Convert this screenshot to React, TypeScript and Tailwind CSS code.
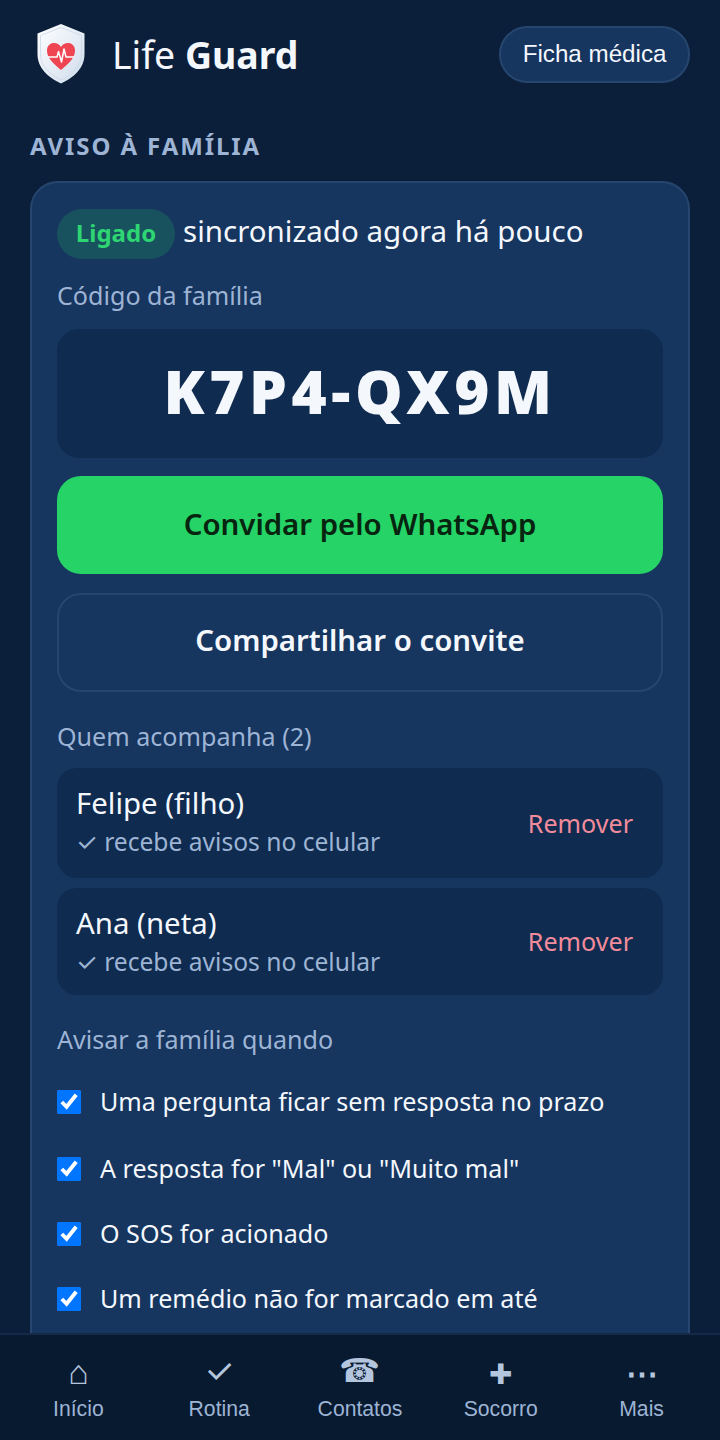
const alerts = [
  { label: "Uma pergunta ficar sem resposta no prazo", gap: "mb-[43px]" },
  { label: 'A resposta for "Mal" ou "Muito mal"', gap: "mb-[41px]" },
  { label: "O SOS for acionado", gap: "mb-[41px]" },
  { label: "Um remédio não for marcado em até", gap: "mb-[41px]" },
];

const navItems = [
  { glyph: "⌂", label: "Início", icon: "text-[34px] pt-[2px]" },
  { glyph: "✓", label: "Rotina", icon: "text-[34px]" },
  { glyph: "☎", label: "Contatos", icon: "text-[33px] pb-[2px]" },
  { glyph: "✚", label: "Socorro", icon: "text-[28px] pt-[6px]" },
  { glyph: "⋯", label: "Mais", icon: "text-[32px] font-bold pt-[6px]" },
];

function ShieldLogo() {
  return (
    <svg width="48" height="60" viewBox="0 0 48 60" className="shrink-0">
      <defs>
        <linearGradient id="shield" x1="0" y1="0" x2="1" y2="1">
          <stop offset="0" stopColor="#ffffff" />
          <stop offset="1" stopColor="#cfdcec" />
        </linearGradient>
      </defs>
      <path
        d="M24 0 L47.5 9.5 V30 C47.5 44 37 53.5 24 59.5 C11 53.5 0.5 44 0.5 30 V9.5 Z"
        fill="url(#shield)"
      />
      <path
        d="M24 3.5 L44.5 11.5 V30 C44.5 42 35.5 50.5 24 56 C12.5 50.5 3.5 42 3.5 30 V11.5 Z"
        fill="none"
        stroke="#c9d7e8"
        strokeWidth="0.8"
      />
      <path
        d="M24 46 C17 40 10 34.5 10 26.5 C10 21.5 13.5 19 17 19 C20 19 22.5 20.5 24 23 C25.5 20.5 28 19 31 19 C34.5 19 38 21.5 38 26.5 C38 34.5 31 40 24 46 Z"
        fill="#ef4452"
      />
      <path
        d="M11 33 H20 L21.5 27.5 L24.5 38 L27 25 L29 33 H37"
        fill="none"
        stroke="#ffffff"
        strokeWidth="1.5"
        strokeLinejoin="round"
      />
    </svg>
  );
}

function FollowerRow({ name, last }: { name: string; last?: boolean }) {
  return (
    <div className={`flex items-center justify-between rounded-[20px] bg-[#0f2b50] pt-[16px] pl-[19px] pr-[30px] ${last ? "pb-[17px]" : "pb-[20px]"}`}>
      <div>
        <div className="text-[29.4px] leading-[38px] text-[#f4f8fd]">{name}</div>
        <div className="mt-[4px] text-[24.6px] leading-[32px] text-[#9db4d4]">✓ recebe avisos no celular</div>
      </div>
      <span className={`text-[25.1px] leading-[32px] text-[#f28b9b] ${last ? "" : "pt-[3px]"}`}>Remover</span>
    </div>
  );
}

export default function App() {
  return (
    <div className="relative h-[1440px] w-[720px] overflow-hidden bg-[#0b1f3a] font-['Noto_Sans','Inter',sans-serif] text-[#f4f8fd]">
      <header className="flex items-center justify-between pl-[37px] pr-[30px] pt-[24px]">
        <div className="flex items-center gap-[27px]">
          <ShieldLogo />
          <h1 className="pt-[2px] text-[37.4px] leading-[52px] font-normal">
            Life <strong className="font-bold">Guard</strong>
          </h1>
        </div>
        <button className="flex h-[57px] items-center rounded-full border-2 border-[#27466f] bg-[#16355f] px-[21.5px] pt-[1px] font-['Liberation_Sans',sans-serif] text-[24.2px] text-[#f4f8fd]">
          Ficha médica
        </button>
      </header>

      <h2 className="mt-[46px] pl-[30px] text-[24px] leading-[32px] font-bold tracking-[1.9px] text-[#9db4d4]">
        AVISO À FAMÍLIA
      </h2>

      <section className="mx-[30px] mt-[19px] rounded-[28px] border-2 border-[#27466f] bg-[#16355f] px-[25px] pt-[26px] pb-[40px]">
        <div className="flex items-center gap-[8px]">
          <span className="flex h-[50px] w-[118px] items-center justify-center rounded-full bg-[#19525f] pb-[2px] text-[24px] font-bold text-[#2ed573]">
            Ligado
          </span>
          <span className="pb-[6px] text-[29.5px] leading-[40px]">sincronizado agora há pouco</span>
        </div>

        <div className="mt-[19px] text-[25.1px] leading-[34px] text-[#9db4d4]">Código da família</div>

        <div className="mt-[17px] flex h-[129px] items-center justify-center rounded-[22px] bg-[#0f2b50] pb-[6px] text-[60px] font-black tracking-[4.6px] text-[#f4f8fd]">
          K7P4-QX9M
        </div>

        <button className="mt-[18px] flex h-[98px] w-full items-center justify-center rounded-[24px] bg-[#25d366] pb-[2px] text-[29.4px] font-semibold text-[#06240f]">
          Convidar pelo WhatsApp
        </button>

        <button className="mt-[19px] flex h-[99px] w-full items-center justify-center rounded-[24px] border-2 border-[#27466f] pb-[4px] text-[29.4px] font-semibold text-[#f4f8fd]">
          Compartilhar o convite
        </button>

        <div className="mt-[27px] text-[25.1px] leading-[34px] text-[#9db4d4]">Quem acompanha (2)</div>

        <div className="mt-[15px] flex flex-col gap-[10px]">
          <FollowerRow name="Felipe (filho)" />
          <FollowerRow name="Ana (neta)" last />
        </div>

        <div className="mt-[27px] text-[25.1px] leading-[34px] text-[#9db4d4]">Avisar a família quando</div>

        <div className="mt-[34px]">
          {alerts.map((a) => (
            <label key={a.label} className={`flex h-[24px] items-center gap-[19px] ${a.gap}`}>
              <input type="checkbox" defaultChecked className="h-[24px] w-[24px] shrink-0" />
              <span className="pb-[2px] text-[25.1px] leading-[34px] text-[#f4f8fd]">{a.label}</span>
            </label>
          ))}
        </div>
      </section>

      <nav className="absolute inset-x-0 bottom-0 grid h-[107px] grid-cols-5 border-t-2 border-[#16294a] bg-[#081a30] px-2 font-['Liberation_Sans',sans-serif] text-[#9db4d4]">
        {navItems.map((item) => (
          <div key={item.label} className="flex flex-col items-center pt-[14px]">
            <span className={`flex h-[44px] items-center font-['Inter',sans-serif] leading-none text-[#b4c6de] ${item.icon}`}>
              {item.glyph}
            </span>
            <span className="mt-[2px] text-[21.2px] leading-[28px]">{item.label}</span>
          </div>
        ))}
      </nav>
    </div>
  );
}
